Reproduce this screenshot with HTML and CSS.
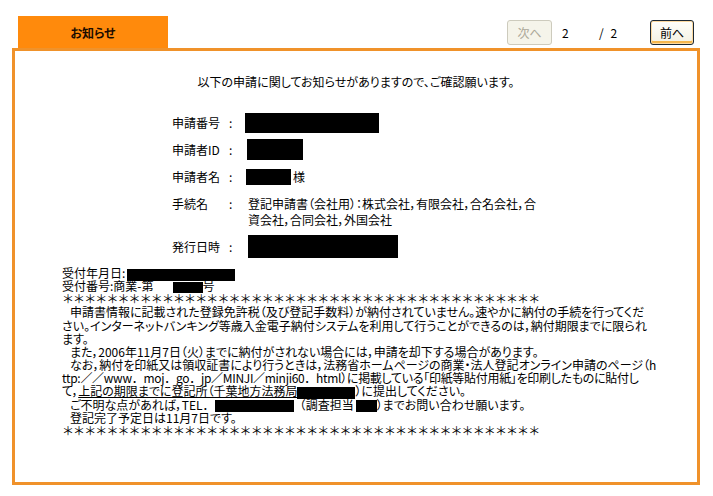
FILE: index.html
```html
<!DOCTYPE html>
<html lang="ja">
<head>
<meta charset="utf-8">
<title>お知らせ</title>
<link rel="stylesheet" href="styles.css">
</head>
<body>
<div class="page">
  <div class="topbar">
    <div class="tab">お知らせ</div>
    <div class="pager">
      <button class="btn btn-off" disabled>次へ</button>
      <span class="cur">2</span>
      <span class="total">/ 2</span>
      <button class="btn btn-on">前へ</button>
    </div>
  </div>
  <div class="panel">
    <p class="lead">以下の申請に関してお知らせがありますので、ご確認願います。</p>
    <div class="fields">
      <div class="lbl">申請番号</div><div class="colon">:</div><div class="val"><span class="mask m-no"></span></div>
      <div class="lbl">申請者ID</div><div class="colon">:</div><div class="val"><span class="mask m-id"></span></div>
      <div class="lbl">申請者名</div><div class="colon">:</div><div class="val"><span class="mask m-name"></span><span class="sama">様</span></div>
      <div class="lbl">手続名</div><div class="colon">:</div><div class="val val-text">登記申請書（会社用）：株式会社，有限会社，合名会社，合<br>資会社，合同会社，外国会社</div>
      <div class="lbl">発行日時</div><div class="colon">:</div><div class="val"><span class="mask m-date"></span></div>
    </div>
    <div class="notice">
      <div>受付年月日:<span class="mask n-date"></span></div>
      <div>受付番号:商業-第<span class="mask n-no"></span>号</div>
      <div class="stars">＊＊＊＊＊＊＊＊＊＊＊＊＊＊＊＊＊＊＊＊＊＊＊＊＊＊＊＊＊＊＊＊＊＊＊＊＊＊＊＊＊＊＊</div>
      <div class="ind">申請書情報に記載された登録免許税（及び登記手数料）が納付されていません。速やかに納付の手続を行ってくだ</div>
      <div>さい。インターネットバンキング等歳入金電子納付システムを利用して行うことができるのは，納付期限までに限られ</div>
      <div>ます。</div>
      <div class="ind">また，2006年11月7日（火）までに納付がされない場合には，申請を却下する場合があります。</div>
      <div class="ind">なお，納付を印紙又は領収証書により行うときは，法務省ホームページの商業・法人登記オンライン申請のページ（h</div>
      <div class="tight">ttp:<span class="fw">／／www．moj．go．jp／MINJI／minji60．html</span>）に掲載している「印紙等貼付用紙」を印刷したものに貼付し</div>
      <div>て，<span class="ul">上記の期限までに登記所（千葉地方法務局</span><span class="mask n-office"></span>）に提出してください。</div>
      <div class="ind">ご不明な点があれば，<span class="fw">TEL．</span><span class="mask n-tel"></span><span class="fw">（</span>調査担当<span class="mask n-staff"></span>）までお問い合わせ願います。</div>
      <div class="ind">登記完了予定日は11月7日です。</div>
      <div class="stars">＊＊＊＊＊＊＊＊＊＊＊＊＊＊＊＊＊＊＊＊＊＊＊＊＊＊＊＊＊＊＊＊＊＊＊＊＊＊＊＊＊＊＊</div>
    </div>
  </div>
</div>
</body>
</html>
```
FILE: styles.css
```css
* { box-sizing: border-box; }
body {
  margin: 0;
  background: #ffffff;
  color: #000000;
  font-family: "Noto Sans CJK JP", "Noto Sans", sans-serif;
  font-size: 12px;
  font-feature-settings: "palt";
}
.page {
  width: 713px;
  padding: 16px 13px 0 12px;
}
.topbar {
  display: flex;
  justify-content: space-between;
  height: 32px;
}
.tab {
  margin-left: 6px;
  width: 150px;
  height: 32px;
  background: #ff8a0c;
  color: #1a0c00;
  font-weight: bold;
  display: flex;
  align-items: center;
  justify-content: center;
}
.pager {
  display: flex;
  align-items: flex-start;
  padding-top: 4px;
  margin-right: 6px;
}
.btn {
  width: 45px;
  height: 25px;
  padding: 0;
  font: inherit;
  border-radius: 3px;
}
.btn-off {
  border: 1px solid #cdcbbd;
  background: #f5f4ea;
  color: #aca899;
}
.btn-on {
  width: 44px;
  border: 1px solid #1c2833;
  color: #000;
  background: linear-gradient(#fffffb, #f3f0e2);
  box-shadow: inset 0 0 0 1px #fcd9a0, inset 0 -2px 0 1px #f6b64c;
}
.cur {
  margin-left: 10px;
  width: 37px;
  line-height: 25px;
}
.total {
  width: 51px;
  line-height: 25px;
  word-spacing: 4px;
}
.panel {
  border: 3px solid #f0922a;
  height: 437px;
  padding-top: 23px;
}
.lead {
  margin: 0;
  text-align: center;
  line-height: 16px;
}
.fields {
  display: grid;
  grid-template-columns: 57px 19px auto;
  margin: 19px 0 0 157px;
}
.lbl, .colon, .val {
  padding: 6px 0 5px;
  line-height: 16px;
}
.val {
  display: flex;
  align-items: center;
}
.val-text { display: block; }
.mask {
  display: inline-block;
  background: #000;
  vertical-align: middle;
}
.m-no { width: 134px; height: 20px; margin: -2px 0 -2px -3px; }
.m-id { width: 56px; height: 21px; margin: -3px 0 -2px -1px; }
.m-name { width: 45px; height: 16px; margin-left: -2px; }
.m-date { width: 150px; height: 23px; margin: -4px 0 -3px 0; }
.sama { margin-left: 2px; }
.notice {
  margin-top: 6px;
  padding-left: 47px;
  line-height: 13.15px;
  white-space: nowrap;
}
.notice .mask { margin-top: -2px; margin-bottom: -2px; }
.ind { padding-left: 8px; }
.stars { letter-spacing: -0.9px; font-feature-settings: normal; }
.fw { font-feature-settings: normal; }
.tight { letter-spacing: -0.3px; }
.ul { text-decoration: underline; }
.n-date { width: 108px; height: 12px; margin-left: 2px; }
.n-no { width: 30px; height: 11px; margin-left: 19px; }
.n-office { width: 58px; height: 12px; }
.n-tel { width: 79px; height: 12px; }
.n-staff { width: 21px; height: 12px; margin-left: 2px; }
```
